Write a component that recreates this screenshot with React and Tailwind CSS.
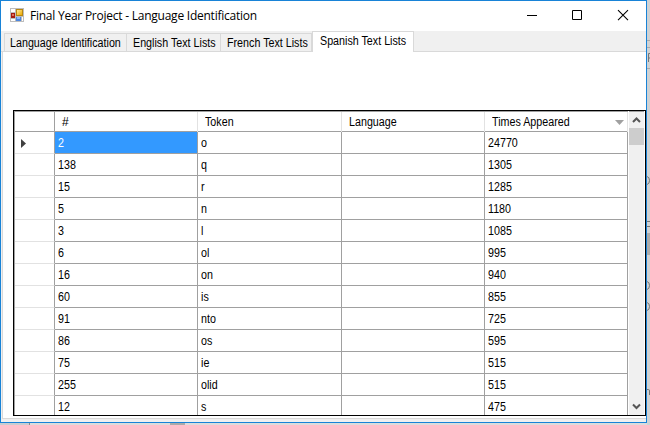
import React from "react";

const rows = [
  ["2", "o", "24770"],
  ["138", "q", "1305"],
  ["15", "r", "1285"],
  ["5", "n", "1180"],
  ["3", "l", "1085"],
  ["6", "ol", "995"],
  ["16", "on", "940"],
  ["60", "is", "855"],
  ["91", "nto", "725"],
  ["86", "os", "595"],
  ["75", "ie", "515"],
  ["255", "olid", "515"],
  ["12", "s", "475"],
];

function AppIcon() {
  return (
    <svg className="ml-[9px] mt-[7px] shrink-0" width="14" height="14" viewBox="0 0 14 14" shapeRendering="crispEdges">
      <defs>
        <linearGradient id="gold" x1="0" y1="0" x2="1" y2="1">
          <stop offset="0" stopColor="#ffeb9a" />
          <stop offset="1" stopColor="#eca900" />
        </linearGradient>
      </defs>
      <rect width="14" height="14" fill="#bdbdbd" />
      <rect x="1" y="1" width="4" height="3" fill="#fff" />
      <rect x="1" y="11" width="4" height="2" fill="#fff" />
      <rect x="12" y="9" width="1" height="4" fill="#fff" />
      <rect x="6" y="1" width="7" height="7" fill="#b88710" />
      <rect x="7" y="2" width="5" height="5" fill="url(#gold)" />
      <rect x="1" y="5" width="4" height="5" fill="#a51c12" />
      <rect x="2" y="6" width="2" height="2" fill="#e0705c" />
      <rect x="6" y="9" width="5" height="4" fill="#4c86e0" />
      <rect x="7" y="9" width="3" height="2" fill="#8fb8f8" />
    </svg>
  );
}

// Condensed label text, as the classic system font draws it.
function Label({ children }) {
  return <span className="inline-block origin-left scale-x-[0.893] whitespace-nowrap">{children}</span>;
}

function TitleBar() {
  return (
    <header className="flex h-[30px] shrink-0 bg-white">
      <AppIcon />
      <h1 className="ml-[6px] flex-1 whitespace-nowrap font-['Open_Sans',sans-serif] text-[12px] leading-[29px] tracking-[-0.24px] text-black">
        Final Year Project - Language Identification
      </h1>
      <svg className="shrink-0" width="125" height="30" viewBox="0 0 125 30" fill="none" stroke="#000">
        <path d="M6 14.500h10" />
        <path d="M51.500 9.500h9v9h-9z" />
        <path d="M97 9.200l10 10M107 9.200l-10 10" strokeWidth="1.1" />
      </svg>
    </header>
  );
}

function Tab({ children, className }) {
  return (
    <div className={"h-[18px] shrink-0 border-r border-t border-[#d9d9d9] bg-[#f0f0f0] leading-[19px] " + className}>
      <Label>{children}</Label>
    </div>
  );
}

function Tabs() {
  return (
    <nav className="flex h-[21px] shrink-0 items-end border-b border-[#d9d9d9] bg-[#f0f0f0] pl-[3px] text-[12px]">
      <Tab className="w-[123px] border-l pl-[5px]">Language Identification</Tab>
      <Tab className="w-[94px] pl-[6px]">English Text Lists</Tab>
      <Tab className="w-[91px] pl-[6px]">French Text Lists</Tab>
      <div className="-mb-px h-[21px] w-[102px] shrink-0 border-x border-t border-[#d9d9d9] bg-white pl-[7px] leading-[19px]">
        <Label>Spanish Text Lists</Label>
      </div>
    </nav>
  );
}

const columns = "grid grid-cols-[40px_143px_144px_143px_143px]";

function Grid() {
  return (
    <div className="ml-[10px] mt-[58px] flex h-[306px] w-[633px] overflow-hidden border border-black">
      <div className="w-[614px] shrink-0 overflow-hidden border-l border-t border-[#a0a0a0] text-[12px]">
        <div className={columns + " h-[20px] border-b border-[#a0a0a0] leading-[20px]"}>
          <div className="border-r border-[#a0a0a0]" />
          <div className="border-r border-[#e2e2e2] pl-[7px]">#</div>
          <div className="border-r border-[#e2e2e2] pl-[7px]"><Label>Token</Label></div>
          <div className="border-r border-[#e2e2e2] pl-[7px]"><Label>Language</Label></div>
          <div className="flex items-center justify-between border-r border-[#e2e2e2] pl-[7px] pr-[3px]">
            <Label>Times Appeared</Label>
            <svg width="9" height="5" viewBox="0 0 9 5">
              <path d="M0 0h9L4.500 5z" fill="#a0a0a0" />
            </svg>
          </div>
        </div>
        {rows.map(([id, token, count], i) => (
          <div key={id} className={columns + " h-[22px] leading-[22px]"}>
            <div className="flex h-[22px] items-center border-b border-r border-b-[#e2e2e2] border-r-[#a0a0a0] pl-[6px] pt-[2px]">
              {i === 0 && (
                <svg width="5" height="9" viewBox="0 0 5 9">
                  <path d="M0 0l5 4.500L0 9z" fill="#404040" />
                </svg>
              )}
            </div>
            <div className={"h-[22px] border-b border-r border-[#a0a0a0] pl-[3px] " + (i === 0 ? "bg-[#3399ff] text-white" : "")}>
              <Label>{id}</Label>
            </div>
            <div className="h-[22px] border-b border-r border-[#a0a0a0] pl-[3px]"><Label>{token}</Label></div>
            <div className="h-[22px] border-b border-r border-[#a0a0a0]" />
            <div className="h-[22px] border-b border-r border-[#a0a0a0] pl-[3px]"><Label>{count}</Label></div>
          </div>
        ))}
      </div>
      <div className="ml-px flex w-[15px] shrink-0 flex-col border-t border-[#a0a0a0] bg-[#f0f0f0]">
        <svg width="15" height="16" viewBox="0 0 15 16" fill="none" stroke="#555" strokeWidth="2">
          <path d="M4 10l3.500-3.500L11 10" />
        </svg>
        <div className="h-[17px] bg-[#cdcdcd]" />
        <svg className="mt-auto" width="15" height="16" viewBox="0 0 15 16" fill="none" stroke="#555" strokeWidth="2">
          <path d="M4 5.500L7.500 9 11 5.500" />
        </svg>
      </div>
    </div>
  );
}

function Backdrop() {
  return (
    <svg className="absolute inset-0" width="650" height="425" shapeRendering="crispEdges">
      <rect width="650" height="425" fill="#dcdcdc" />
      <path d="M0 423h30v2H0z" fill="#c8cdd1" />
      <path d="M29 423h1v2h-1z" fill="#888" />
      <path d="M170 423h15v2h-15z" fill="#aaa" />
      <path d="M647 0h3v425h-3z" fill="#d0d2d4" />
      <path d="M647 40h3v1h-3zM647 47h3v1h-3zM647 68h3v1h-3z" fill="#aaa" />
      <path d="M647 221h3v1h-3zM647 226h3v1h-3z" fill="#777" />
      <path d="M647 233h3v22h-3z" fill="#acacac" />
      <g fill="none" stroke="#777" shapeRendering="auto">
        <path d="M648.500 62v-8.500H650M648.500 58H650" />
        <path d="M647 176.500q2.500 .5 2.500 4t-2.500 4M647 281.500q2.500 .5 2.500 4t-2.500 4M647 302.500q2.500 .5 2.500 4t-2.500 4" />
        <path d="M647 389.500h1.500q1 0 1 1.500v4" />
      </g>
    </svg>
  );
}

export default function App() {
  return (
    <div className="relative h-[425px] w-[650px] overflow-hidden font-['Liberation_Sans',sans-serif] text-black">
      <Backdrop />
      <main className="relative flex h-[423px] w-[647px] flex-col border border-[#1883d7] bg-[#f0f0f0]">
        <TitleBar />
        <Tabs />
        <section className="ml-px h-[367px] shrink-0 border-b border-l border-[#d9d9d9] bg-white">
          <Grid />
        </section>
      </main>
    </div>
  );
}
